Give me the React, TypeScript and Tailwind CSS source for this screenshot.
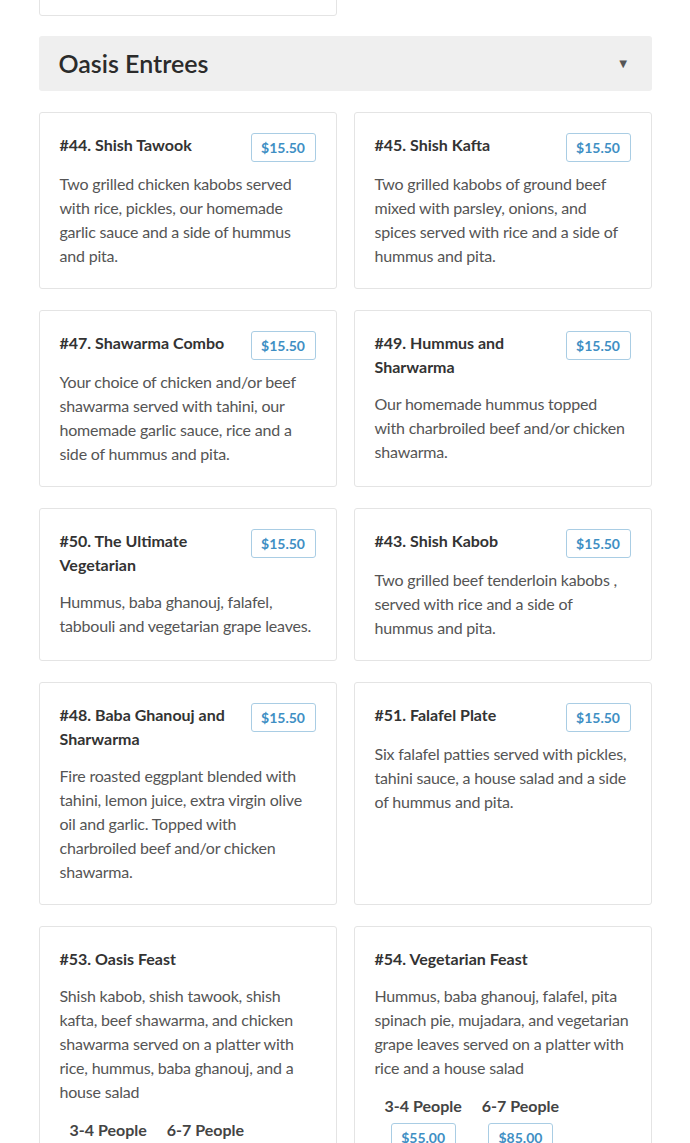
import React from 'react';

type Item = {
  title: string;
  price?: string;
  desc: string;
  sizes?: { label: string; price: string }[];
};

const items: Item[] = [
  { title: '#44. Shish Tawook', price: '$15.50', desc: 'Two grilled chicken kabobs served with rice, pickles, our homemade garlic sauce and a side of hummus and pita.' },
  { title: '#45. Shish Kafta', price: '$15.50', desc: 'Two grilled kabobs of ground beef mixed with parsley, onions, and spices served with rice and a side of hummus and pita.' },
  { title: '#47. Shawarma Combo', price: '$15.50', desc: 'Your choice of chicken and/or beef shawarma served with tahini, our homemade garlic sauce, rice and a side of hummus and pita.' },
  { title: '#49. Hummus and Sharwarma', price: '$15.50', desc: 'Our homemade hummus topped with charbroiled beef and/or chicken shawarma.' },
  { title: '#50. The Ultimate Vegetarian', price: '$15.50', desc: 'Hummus, baba ghanouj, falafel, tabbouli and vegetarian grape leaves.' },
  { title: '#43. Shish Kabob', price: '$15.50', desc: 'Two grilled beef tenderloin kabobs , served with rice and a side of hummus and pita.' },
  { title: '#48. Baba Ghanouj and Sharwarma', price: '$15.50', desc: 'Fire roasted eggplant blended with tahini, lemon juice, extra virgin olive oil and garlic. Topped with charbroiled beef and/or chicken shawarma.' },
  { title: '#51. Falafel Plate', price: '$15.50', desc: 'Six falafel patties served with pickles, tahini sauce, a house salad and a side of hummus and pita.' },
  {
    title: '#53. Oasis Feast',
    desc: 'Shish kabob, shish tawook, shish kafta, beef shawarma, and chicken shawarma served on a platter with rice, hummus, baba ghanouj, and a house salad',
    sizes: [
      { label: '3-4 People', price: '$55.00' },
      { label: '6-7 People', price: '$85.00' },
    ],
  },
  {
    title: '#54. Vegetarian Feast',
    desc: 'Hummus, baba ghanouj, falafel, pita spinach pie, mujadara, and vegetarian grape leaves served on a platter with rice and a house salad',
    sizes: [
      { label: '3-4 People', price: '$55.00' },
      { label: '6-7 People', price: '$85.00' },
    ],
  },
];

const Price: React.FC<{ value: string; className?: string }> = ({ value, className = '' }) => (
  <span
    className={`inline-flex h-[29px] w-[65px] shrink-0 items-center justify-center rounded-[3px] border border-[#a9cde4] text-[14px] font-bold text-[#3f8fc4] ${className}`}
  >
    {value}
  </span>
);

const Card: React.FC<{ item: Item }> = ({ item }) => (
  <div className="rounded-[3px] border border-[#e4e4e4] bg-white p-5">
    <div className="flex items-start justify-between gap-6">
      <h3 className="text-[16px] font-bold leading-6 text-[#333]">{item.title}</h3>
      {item.price && <Price value={item.price} className="-mb-[3px]" />}
    </div>
    <p className="mt-[13px] text-[16px] leading-6 tracking-[-0.2px] text-[#555]">{item.desc}</p>
    {item.sizes && (
      <div className="mt-[14px] flex">
        {item.sizes.map((s) => (
          <div key={s.label} className="flex flex-col items-center px-[10px]">
            <span className="text-[16px] font-bold leading-6 text-[#444]">{s.label}</span>
            <Price value={s.price} className="mt-[5px]" />
          </div>
        ))}
      </div>
    )}
  </div>
);

export default function App() {
  return (
    <div className="min-h-screen bg-white font-['Lato','Liberation_Sans',sans-serif]">
      <div className="mx-auto w-[613px] -mt-[30px]">
        <div className="grid grid-cols-2 gap-x-[17px]">
          <div className="h-[46px] rounded-[3px] border border-[#e4e4e4] bg-white" />
        </div>

        <div className="mt-[20px] flex h-[55px] items-center justify-between rounded-[3px] bg-[#efefef] px-5">
          <h2 className="text-[25px] font-semibold text-[#2b2b2b]">Oasis Entrees</h2>
          <span className="mr-[2px] text-[13px] text-[#555]">▼</span>
        </div>

        <div className="mt-[21px] grid grid-cols-2 gap-x-[17px] gap-y-[21px]">
          {items.map((it) => (
            <Card key={it.title} item={it} />
          ))}
        </div>
      </div>
    </div>
  );
}
